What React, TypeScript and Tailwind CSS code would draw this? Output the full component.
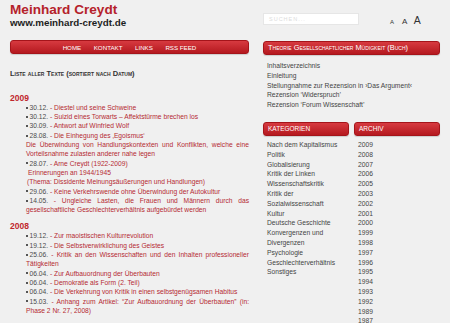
const font = "font-['Liberation_Sans',Arial,sans-serif]";

const bar =
  'bg-[linear-gradient(#d73a40,#b5191f)] border border-[#a5141a] rounded-[3px] shadow-[0_1px_1px_rgba(0,0,0,0.15)] text-white';

type Entry = { date: string; title: string; extra?: string[]; note?: string };

const y2009: Entry[] = [
  { date: '30.12.', title: 'Diestel und seine Schweine' },
  { date: '30.12.', title: 'Suizid eines Torwarts – Affektstürme brechen los' },
  { date: '30.09.', title: 'Antwort auf Winfried Wolf' },
  {
    date: '28.08.',
    title: 'Die Einhegung des ‚Egoismus‘',
    note: 'Die Überwindung von Handlungskontexten und Konflikten, welche eine Vorteilsnahme zulasten anderer nahe legen',
  },
  {
    date: '28.07.',
    title: 'Arne Creydt (1922-2009)',
    extra: ['Erinnerungen an 1944/1945', '(Thema: Dissidente Meinungsäußerungen und Handlungen)'],
  },
  { date: '29.06.', title: 'Keine Verkehrswende ohne Überwindung der Autokultur' },
  {
    date: '14.05.',
    title: 'Ungleiche Lasten, die Frauen und Männern durch das gesellschaftliche Geschlechterverhältnis aufgebürdet werden',
  },
];

const y2008: Entry[] = [
  { date: '19.12.', title: 'Zur maoistischen Kulturrevolution' },
  { date: '19.12.', title: 'Die Selbstverwirklichung des Geistes' },
  { date: '25.06.', title: 'Kritik an den Wissenschaften und den Inhalten professioneller Tätigkeiten' },
  { date: '06.04.', title: 'Zur Aufbauordnung der Überbauten' },
  { date: '06.04.', title: 'Demokratie als Form (2. Teil)' },
  { date: '06.04.', title: 'Die Verkehrung von Kritik in einen selbstgenügsamen Habitus' },
  { date: '15.03.', title: 'Anhang zum Artikel: “Zur Aufbauordnung der Überbauten” (in: Phase 2 Nr. 27, 2008)' },
];

const buch = [
  'Inhaltsverzeichnis',
  'Einleitung',
  'Stellungnahme zur Rezension in ›Das Argument‹',
  'Rezension ‘Widerspruch’',
  'Rezension ‘Forum Wissenschaft’',
];

const kategorien = [
  'Nach dem Kapitalismus',
  'Politik',
  'Globalisierung',
  'Kritik der Linken',
  'Wissenschaftskritik',
  'Kritik der Sozialwissenschaft',
  'Kultur',
  'Deutsche Geschichte',
  'Konvergenzen und Divergenzen',
  'Psychologie',
  'Geschlechterverhältnis',
  'Sonstiges',
];

// no 2004 in the archive
const archiv = [
  '2009', '2008', '2007', '2006', '2005', '2003', '2002', '2001', '2000',
  '1999', '1998', '1997', '1996', '1995', '1994', '1993', '1992', '1989', '1987',
];

function YearList({ year, items }: { year: string; items: Entry[] }) {
  return (
    <div className="flex flex-col">
      <h3 className="text-[8.5px] leading-[10px] font-bold text-[#c0272d]">{year}</h3>
      <ul className="ml-4 text-[6.7px] leading-[9.3px]">
        {items.map((it, i) => (
          <li key={i} className="text-justify">
            <span className="inline-block w-[2px] h-[2px] bg-[#555] align-middle mr-[1.5px] mb-[1px]" />
            <span className="text-[#4b4b4b]">{it.date} </span>
            <a className="text-[#b52a32]">- {it.title}</a>
            {it.extra?.map((e, j) => (
              <span key={j} className={j === 0 ? 'block text-[#b52a32] pl-[2px]' : 'block text-[#b52a32] pl-[1px]'}>
                {e}
              </span>
            ))}
            {it.note && <span className="block text-[#b52a32] text-justify">{it.note}</span>}
          </li>
        ))}
      </ul>
    </div>
  );
}

export default function App() {
  return (
    <div className={`w-[450px] h-[323px] overflow-hidden bg-[#f0f0f0] ${font}`}>
      <div className="flex gap-[14px] pl-[10px]">
        {/* left column */}
        <div className="w-[239px] shrink-0">
          <div className="pt-[3px]">
            <h1 className="text-[13.6px] leading-none font-bold text-[#b5222b]">Meinhard Creydt</h1>
            <p className="mt-[1px] text-[9.8px] leading-none font-bold text-[#1e1e1e]">www.meinhard-creydt.de</p>
          </div>

          <nav className={`mt-[13px] h-[14px] flex items-center justify-center gap-[12.5px] text-[6.2px] ${bar}`}>
            <a>HOME</a>
            <a>KONTAKT</a>
            <a>LINKS</a>
            <a>RSS FEED</a>
          </nav>

          <h2 className="mt-[15px] text-[7.5px] leading-[10px] font-bold text-[#333] [font-variant:small-caps]">
            Liste aller Texte (sortiert nach Datum)
          </h2>

          <div className="mt-[13.5px]">
            <YearList year="2009" items={y2009} />
          </div>
          <div className="mt-[7px]">
            <YearList year="2008" items={y2008} />
          </div>
        </div>

        {/* right column */}
        <div className="w-[177px] shrink-0">
          <div className="h-[41px] flex items-start pt-[13px]">
            <div className="w-[96px] h-[12px] bg-white border border-[#e6e6e6] flex items-center pl-[5px]">
              <span className="text-[5.5px] tracking-[1px] text-[#dcdcdc]">SUCHEN...</span>
            </div>
            <div className="ml-[31px] h-[9px] flex items-baseline text-[#333]">
              <span className="text-[6px] mr-[8px]">A</span>
              <span className="text-[8px] mr-[6.5px]">A</span>
              <span className="text-[10.5px]">A</span>
            </div>
          </div>

          <div className={`h-[14px] flex items-center pl-[4px] text-[7.4px] [font-variant:small-caps] ${bar}`}>
            Theorie Gesellschaftlicher Müdigkeit (Buch)
          </div>
          <ul className="mt-[6px] pl-[4px] text-[6.7px] leading-[9.8px] text-[#444]">
            {buch.map((b) => (
              <li key={b}>{b}</li>
            ))}
          </ul>

          <div className="mt-[12px] flex gap-[5px]">
            <div className="w-[86px]">
              <div className={`h-[14px] flex items-center pl-[4px] text-[6.5px] ${bar}`}>KATEGORIEN</div>
              <ul className="mt-[4px] pl-[4px] pr-[4px] text-[6.7px] leading-[9.8px] text-[#444]">
                {kategorien.map((k) => (
                  <li key={k}>{k}</li>
                ))}
              </ul>
            </div>
            <div className="w-[86px]">
              <div className={`h-[14px] flex items-center pl-[4px] text-[6.5px] ${bar}`}>ARCHIV</div>
              <ul className="mt-[4px] pl-[4px] text-[6.7px] leading-[9.8px] text-[#444]">
                {archiv.map((a) => (
                  <li key={a}>{a}</li>
                ))}
              </ul>
            </div>
          </div>
        </div>
      </div>
    </div>
  );
}
